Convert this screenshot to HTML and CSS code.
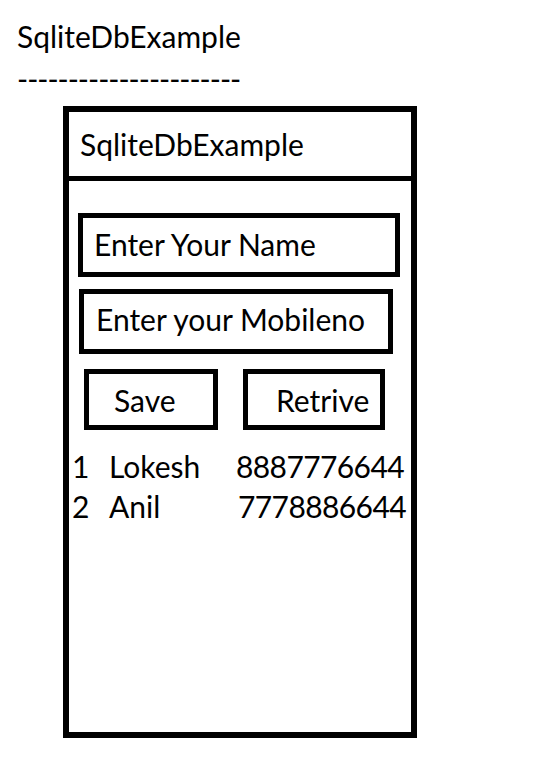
FILE: index.html
```html
<!DOCTYPE html>
<html>
<head>
<meta charset="utf-8">
<link rel="stylesheet" href="styles.css">
</head>
<body>
<div class="page">
  <div class="title">SqliteDbExample</div>
  <div class="dashes">----------------------</div>
  <div class="phone">
    <div class="header">SqliteDbExample</div>
    <div class="content">
      <div class="input input-name">Enter Your Name</div>
      <div class="input input-mobile">Enter your Mobileno</div>
      <div class="buttons">
        <div class="btn btn-save">Save</div>
        <div class="btn btn-retrive">Retrive</div>
      </div>
      <div class="rows">
        <span class="num">1</span><span class="name">Lokesh</span><span class="phone-no">8887776644</span>
        <span class="num">2</span><span class="name">Anil</span><span class="phone-no shifted">7778886644</span>
      </div>
    </div>
  </div>
</div>
</body>
</html>
```
FILE: styles.css
```css
html, body {
  margin: 0;
  padding: 0;
  background: #fff;
}
body {
  font-family: Lato, "Liberation Sans", sans-serif;
  font-size: 30px;
  color: #000;
}
.page {
  padding: 18px 0 0 17px;
}
.title {
  line-height: 36px;
  height: 36px;
}
.dashes {
  line-height: 36px;
  height: 36px;
  margin-top: 6px;
  letter-spacing: -1px;
}
.phone {
  margin-top: 10px;
  margin-left: 46px;
  width: 354px;
  height: 632px;
  box-sizing: border-box;
  border: 6px solid #000;
  display: flex;
  flex-direction: column;
}
.header {
  height: 69px;
  box-sizing: border-box;
  border-bottom: 5px solid #000;
  padding-left: 11px;
  display: flex;
  align-items: center;
}
.content {
  padding: 32px 0 0 0;
  display: flex;
  flex-direction: column;
}
.input {
  box-sizing: border-box;
  border: 5px solid #000;
  display: flex;
  align-items: center;
  white-space: nowrap;
}
.input-name {
  margin-left: 9px;
  width: 322px;
  height: 64px;
  padding-left: 11px;
  padding-bottom: 3px;
}
.input-mobile {
  margin-left: 10px;
  margin-top: 12px;
  width: 314px;
  height: 65px;
  padding-left: 12px;
  padding-bottom: 5px;
}
.buttons {
  display: flex;
  margin-top: 15px;
  margin-left: 15px;
  gap: 25px;
}
.btn {
  box-sizing: border-box;
  border: 5px solid #000;
  height: 61px;
  display: flex;
  align-items: center;
}
.btn-save {
  width: 134px;
  padding-left: 25px;
}
.btn-retrive {
  width: 142px;
  padding-left: 28px;
}
.rows {
  display: grid;
  grid-template-columns: 37px 127px auto;
  margin-left: 3px;
  margin-top: 16px;
  line-height: 40px;
}
.phone-no {
  letter-spacing: -0.6px;
}
.phone-no.shifted {
  padding-left: 2px;
}
```
